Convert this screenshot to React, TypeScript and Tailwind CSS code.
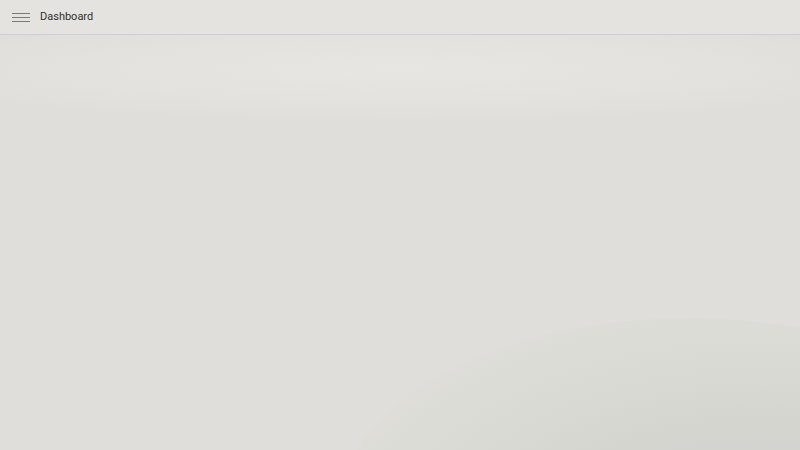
export default function App() {
  return (
    <div
      className="relative flex h-[450px] w-[800px] flex-col overflow-hidden bg-[#dfdeda]"
      style={{ fontFamily: 'Roboto, "Liberation Sans", sans-serif' }}
    >
      {/* glow under the header */}
      <div className="pointer-events-none absolute left-[-100px] top-[20px] h-[100px] w-[1000px] rounded-[50%] bg-[radial-gradient(ellipse_at_center,#e7e6e2_0%,#e3e2de_45%,rgba(223,222,218,0)_75%)]" />
      {/* soft blob bottom right */}
      <div className="pointer-events-none absolute left-[340px] top-[318px] h-[380px] w-[700px] rounded-[50%] bg-[radial-gradient(ellipse_at_60%_65%,#cfcfcc_0%,#d4d5cf_40%,#dadbd4_62%,rgba(223,222,218,0)_80%)]" />

      <header className="relative z-10 flex h-[35px] shrink-0 items-center gap-[10px] border-b border-[#c9d0d6] bg-[#e4e3df] px-[12px] pt-px">
        <button className="flex h-[18px] w-[18px] flex-col justify-center gap-[3px]">
          <span className="block h-px w-[18px] bg-[#7a7a78]" />
          <span className="block h-px w-[18px] bg-[#7a7a78]" />
          <span className="block h-px w-[18px] bg-[#7a7a78]" />
        </button>
        <span className="text-[11px] text-[#2f2f2f]">Dashboard</span>
      </header>

      <main className="relative z-10 flex-1" />
    </div>
  );
}
